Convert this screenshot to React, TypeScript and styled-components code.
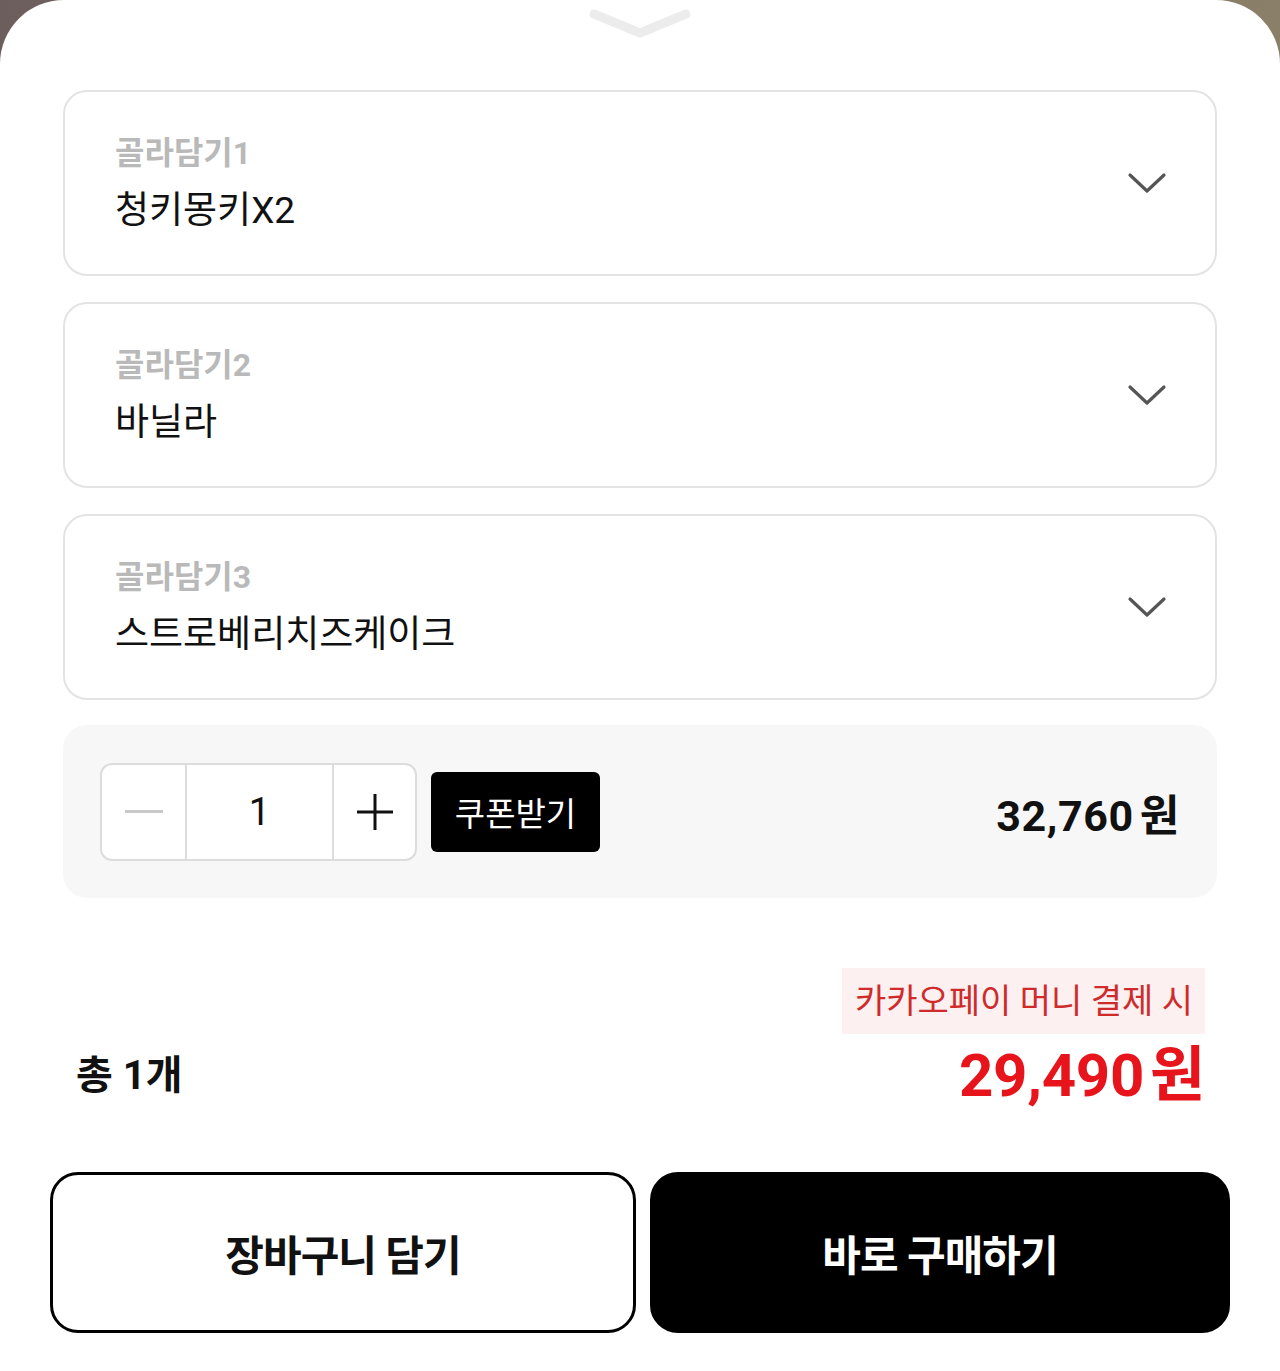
import React from 'react';
import styled, { createGlobalStyle } from 'styled-components';

const GlobalStyle = createGlobalStyle`
  html, body {
    margin: 0;
    padding: 0;
    background: linear-gradient(90deg, #6b5e5c 0%, #7d716a 50%, #8a7f68 100%);
  }
  * {
    box-sizing: border-box;
  }
  body {
    font-family: Roboto, 'Noto Sans CJK KR', 'Noto Sans', sans-serif;
    color: #111;
  }
`;

const Sheet = styled.div`
  width: 1280px;
  min-height: 1371px;
  background: #fff;
  border-radius: 64px 64px 0 0;
  display: flex;
  flex-direction: column;
  padding-bottom: 38px;
`;

const Handle = styled.div`
  display: flex;
  justify-content: center;
  height: 90px;
  padding-top: 6px;
`;

const Options = styled.div`
  display: flex;
  flex-direction: column;
  gap: 26px;
  padding: 0 63px;
`;

const OptionCard = styled.div`
  height: 186px;
  border: 2px solid #e3e3e3;
  border-radius: 24px;
  display: flex;
  align-items: center;
  justify-content: space-between;
  padding: 0 48px 0 50px;
`;

const OptionText = styled.div`
  display: flex;
  flex-direction: column;
  gap: 11px;
`;

const OptionLabel = styled.span`
  font-size: 32px;
  line-height: 44px;
  font-weight: 700;
  color: #b9b9b9;
`;

const OptionValue = styled.span`
  font-size: 37px;
  line-height: 50px;
  color: #111;
`;

const QtyPanel = styled.div`
  margin: 25px 63px 0;
  height: 173px;
  background: #f7f7f7;
  border-radius: 24px;
  display: flex;
  align-items: center;
  padding: 0 37px;
`;

const Stepper = styled.div`
  display: flex;
  height: 98px;
  border: 2px solid #dcdcdc;
  border-radius: 12px;
  background: #fff;
  overflow: hidden;
`;

const StepCell = styled.div<{ $w: number; $divider?: boolean }>`
  width: ${(p) => p.$w}px;
  display: flex;
  align-items: center;
  justify-content: center;
  border-left: ${(p) => (p.$divider ? '2px solid #dcdcdc' : 'none')};
  font-size: 38px;
  color: #111;
`;

const CouponButton = styled.button`
  margin-left: 14px;
  width: 169px;
  height: 80px;
  background: #000;
  color: #fff;
  border: none;
  border-radius: 6px;
  font-family: inherit;
  font-size: 33px;
  padding: 0;
`;

const LinePrice = styled.div`
  margin-left: auto;
  font-size: 43px;
  font-weight: 700;
  color: #111;
  letter-spacing: 0.6px;
`;

const Summary = styled.div`
  margin-top: 70px;
  padding: 0 75px 0 76px;
  display: flex;
  justify-content: space-between;
  align-items: flex-end;
`;

const TotalCount = styled.div`
  font-size: 40px;
  line-height: 72px;
  font-weight: 700;
  color: #111;
`;

const PriceColumn = styled.div`
  display: flex;
  flex-direction: column;
  align-items: flex-end;
  gap: 6px;
`;

const PayTag = styled.div`
  background: #fdf0f0;
  color: #cf2b2b;
  font-size: 34px;
  line-height: 66px;
  padding: 0 12px 0 13px;
`;

const FinalPrice = styled.div`
  font-size: 60px;
  line-height: 72px;
  font-weight: 700;
  color: #e8141c;
  letter-spacing: -0.3px;
`;

const Won = styled.span`
  margin-left: 6px;
`;

const Actions = styled.div`
  margin-top: 60px;
  padding: 0 50px;
  display: flex;
  gap: 14px;
`;

const ActionButton = styled.button<{ $primary?: boolean }>`
  flex: ${(p) => (p.$primary ? '0 0 580px' : '0 0 586px')};
  height: 161px;
  border-radius: 28px;
  border: 3px solid #000;
  background: ${(p) => (p.$primary ? '#000' : '#fff')};
  color: ${(p) => (p.$primary ? '#fff' : '#111')};
  font-family: inherit;
  font-size: 42px;
  font-weight: 700;
  letter-spacing: -1px;
`;

const Chevron = () => (
  <svg width="40" height="24" viewBox="0 0 40 24" fill="none">
    <path d="M3 4 L20 20 L37 4" stroke="#555" strokeWidth="3.2" strokeLinecap="round" strokeLinejoin="round" />
  </svg>
);

const options = [
  { label: '골라담기1', value: '청키몽키X2' },
  { label: '골라담기2', value: '바닐라' },
  { label: '골라담기3', value: '스트로베리치즈케이크' },
];

const App = () => (
  <>
    <GlobalStyle />
    <Sheet>
      <Handle>
        <svg width="104" height="34" viewBox="0 0 104 34" fill="none">
          <path d="M6 8 L52 27 L98 8" stroke="#ececec" strokeWidth="9" strokeLinecap="round" strokeLinejoin="round" />
        </svg>
      </Handle>
      <Options>
        {options.map((o) => (
          <OptionCard key={o.label}>
            <OptionText>
              <OptionLabel>{o.label}</OptionLabel>
              <OptionValue>{o.value}</OptionValue>
            </OptionText>
            <Chevron />
          </OptionCard>
        ))}
      </Options>
      <QtyPanel>
        <Stepper>
          <StepCell $w={83}>
            <svg width="38" height="4" viewBox="0 0 38 4">
              <rect x="0" y="0" width="38" height="3" fill="#c9c9c9" />
            </svg>
          </StepCell>
          <StepCell $w={147} $divider>
            1
          </StepCell>
          <StepCell $w={83} $divider>
            <svg width="36" height="36" viewBox="0 0 36 36">
              <rect x="16.5" y="0" width="3" height="36" fill="#111" />
              <rect x="0" y="16.5" width="36" height="3" fill="#111" />
            </svg>
          </StepCell>
        </Stepper>
        <CouponButton type="button">쿠폰받기</CouponButton>
        <LinePrice>
          32,760<Won>원</Won>
        </LinePrice>
      </QtyPanel>
      <Summary>
        <TotalCount>총 1개</TotalCount>
        <PriceColumn>
          <PayTag>카카오페이 머니 결제 시</PayTag>
          <FinalPrice>
            29,490<Won>원</Won>
          </FinalPrice>
        </PriceColumn>
      </Summary>
      <Actions>
        <ActionButton type="button">장바구니 담기</ActionButton>
        <ActionButton type="button" $primary>
          바로 구매하기
        </ActionButton>
      </Actions>
    </Sheet>
  </>
);

export default App;
